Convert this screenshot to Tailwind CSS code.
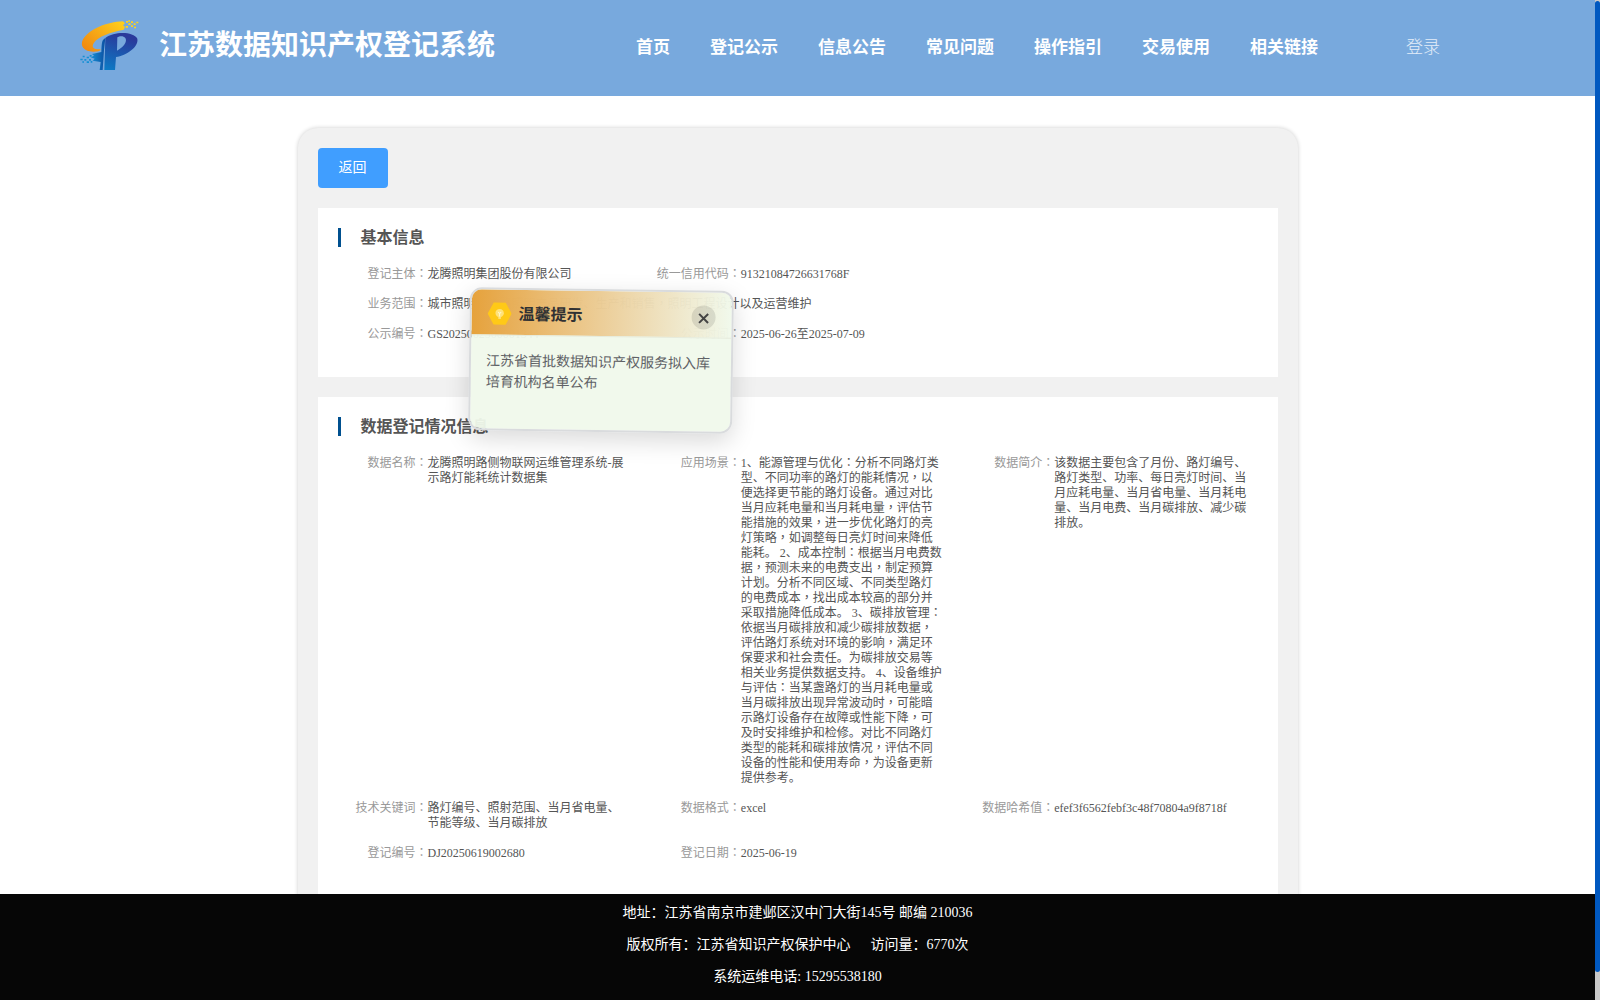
<!DOCTYPE html>
<html lang="zh-CN">
<head>
    <meta charset="UTF-8">
    <title>江苏数据知识产权登记系统</title>
    <script src="https://cdn.jsdelivr.net/npm/@tailwindcss/browser@4"></script>
    <style>
        body {
            font-family: "Liberation Serif", "Noto Sans CJK SC", serif;
        }
        /* full-width punctuation centred in its box */
        .label::after,
        .mid {
            font-family: "Noto Sans CJK TC", sans-serif;
            font-feature-settings: "locl" 0;
            line-height: 0;
        }
        .label::after {
            content: "：";
        }
    </style>
</head>
<body class="h-[1000px] overflow-hidden bg-white flex">
    <div class="w-[1595px] h-full flex flex-col">
        <header class="h-24 shrink-0 bg-[#78a9dd] flex items-center text-white whitespace-nowrap">
            <svg class="ml-[70px] mt-[-6px] w-20 h-[70px] shrink-0" viewBox="0 0 240 210">
                <defs>
                    <linearGradient id="gold" x1="0" y1="0.8" x2="1" y2="0">
                        <stop offset="0" stop-color="#f08a10" />
                        <stop offset="1" stop-color="#ffd21c" />
                    </linearGradient>
                    <linearGradient id="stem" x1="0" y1="0" x2="1" y2="0">
                        <stop offset="0" stop-color="#1590d4" />
                        <stop offset="1" stop-color="#0c4fa2" />
                    </linearGradient>
                    <linearGradient id="pbody" x1="0" y1="1" x2="0.3" y2="0">
                        <stop offset="0" stop-color="#0b7cc6" />
                        <stop offset="1" stop-color="#2a3a9b" />
                    </linearGradient>
                </defs>
                <path fill="url(#gold)" d="M159 34C110 36 57 58 39 88C28 110 44 126 72 125C88 125 90 123 92 118C72 119 62 112 72 98C84 80 122 66 161 59L165 51L159 46L165 40Z" />
                <path fill="#ffd21c" d="M168 33h6v5h-6zM175 40h7v5h-7zM183 34h6v5h-6zM167 48h7v5h-7zM183 46h6v5h-6zM191 40h6v5h-6zM199 35h6v5h-6zM192 50h6v5h-6zM175 31h5v4h-5z" />
                <path fill="url(#pbody)" d="M103 180L106 84C132 64 190 64 202 86C207 110 170 136 138 141L135 180ZM141 122C160 112 173 95 166 84C160 76 148 78 142 82Z" fill-rule="evenodd" />
                <path fill="url(#stem)" d="M106 84C97 89 95 94 94 126L66 132L72 137L62 142L74 146L68 152L92 156L89 180H98L102 120Z" />
                <path fill="#1590d4" d="M59 135h6v5h-6zM50 140h7v5h-7zM38 137h6v5h-6zM31 146h7v5h-7zM43 147h6v5h-6zM57 147h6v5h-6zM50 154h7v5h-7zM62 153h5v5h-5zM37 154h5v4h-5z" />
            </svg>
            <h1 class="ml-[9px] mt-[-4px] w-[337px] text-[28px] font-bold leading-none">江苏数据知识产权登记系统</h1>
            <nav class="ml-[140px] mt-[-2px] flex gap-10 text-[17px] leading-none font-bold">
                <a>首页</a>
                <a>登记公示</a>
                <a>信息公告</a>
                <a>常见问题</a>
                <a>操作指引</a>
                <a>交易使用</a>
                <a>相关链接</a>
            </nav>
            <a class="ml-[88px] mt-[-2px] text-[17px] leading-none font-light text-white/80">登录</a>
        </header>

        <main class="flex-1 min-h-0 overflow-hidden pt-8">
            <div class="mx-auto w-[1000px] h-[900px] rounded-[20px] bg-[#f1f1f1] p-5 shadow-[0_0_4px_rgba(0,0,0,0.2)]">
                <button class="block w-[70px] h-10 rounded bg-[#409eff] text-white text-sm">返回</button>

                <section class="mt-5 h-[169px] bg-white pt-5 text-xs leading-[15px] text-[#555] whitespace-nowrap">
                    <h2 class="ml-5 h-[19px] border-l-[3px] border-[#00508f] pl-5 text-base leading-[20px] font-bold">基本信息</h2>
                    <div class="mt-5 ml-[10px] grid grid-cols-[313.33px_313.33px_313.33px] gap-y-[15px]">
                        <div class="flex"><span class="label w-[100px] text-right text-[#999]">登记主体</span><span>龙腾照明集团股份有限公司</span></div>
                        <div class="flex col-span-2"><span class="label w-[100px] text-right text-[#999]">统一信用代码</span><span>91321084726631768F</span></div>
                        <div class="flex col-span-3"><span class="label w-[100px] text-right text-[#999]">业务范围</span><p>城市照明、道路照明产品研发、生产和销售，照明工程设计以及运营维护</p></div>
                        <div class="flex"><span class="label w-[100px] text-right text-[#999]">公示编号</span><span>GS2025062500001344</span></div>
                        <div class="flex col-span-2"><span class="label w-[100px] text-right text-[#999]">公示时间</span><span>2025-06-26至2025-07-09</span></div>
                    </div>
                </section>

                <section class="mt-5 h-[600px] bg-white pt-5 text-xs leading-[15px] text-[#555] whitespace-nowrap">
                    <h2 class="ml-5 h-[19px] border-l-[3px] border-[#00508f] pl-5 text-base leading-[20px] font-bold">数据登记情况信息</h2>
                    <div class="mt-5 ml-[10px] grid grid-cols-[313.33px_313.33px_313.33px] gap-y-[15px]">
                        <div class="flex"><span class="label w-[100px] text-right text-[#999]">数据名称</span><span>龙腾照明路侧物联网运维管理系统-展<br>示路灯能耗统计数据集</span></div>
                        <div class="flex"><span class="label w-[100px] text-right text-[#999]">应用场景</span>
                            <p>1、能源管理与优化：分析不同路灯类<br>型、不同功率的路灯的能耗情况，以<br>便选择更节能的路灯设备。通过对比<br>当月应耗电量和当月耗电量，评估节<br>能措施的效果，进一步优化路灯的亮<br>灯策略，如调整每日亮灯时间来降低<br>能耗。 2、成本控制：根据当月电费数<br>据，预测未来的电费支出，制定预算<br>计划。分析不同区域、不同类型路灯<br>的电费成本，找出成本较高的部分并<br>采取措施降低成本。 3、碳排放管理：<br>依据当月碳排放和减少碳排放数据，<br>评估路灯系统对环境的影响，满足环<br>保要求和社会责任。为碳排放交易等<br>相关业务提供数据支持。 4、设备维护<br>与评估：当某盏路灯的当月耗电量或<br>当月碳排放出现异常波动时，可能暗<br>示路灯设备存在故障或性能下降，可<br>及时安排维护和检修。对比不同路灯<br>类型的能耗和碳排放情况，评估不同<br>设备的性能和使用寿命，为设备更新<br>提供参考。</p>
                        </div>
                        <div class="flex"><span class="label w-[100px] text-right text-[#999]">数据简介</span>
                            <p>该数据主要包含了月份、路灯编号、<br>路灯类型、功率、每日亮灯时间、当<br>月应耗电量、当月省电量、当月耗电<br>量、当月电费、当月碳排放、减少碳<br>排放。</p>
                        </div>
                        <div class="flex"><span class="label w-[100px] text-right text-[#999]">技术关键词</span><span>路灯编号、照射范围、当月省电量、<br>节能等级、当月碳排放</span></div>
                        <div class="flex"><span class="label w-[100px] text-right text-[#999]">数据格式</span><span>excel</span></div>
                        <div class="flex"><span class="label w-[100px] text-right text-[#999]">数据哈希值</span><span>efef3f6562febf3c48f70804a9f8718f</span></div>
                        <div class="flex"><span class="label w-[100px] text-right text-[#999]">登记编号</span><span>DJ20250619002680</span></div>
                        <div class="flex"><span class="label w-[100px] text-right text-[#999]">登记日期</span><span>2025-06-19</span></div>
                    </div>
                </section>
            </div>
        </main>

        <footer class="h-[106px] shrink-0 bg-[#060606] pt-[3px] text-center text-sm leading-8 text-white">
            <p>地址：江苏省南京市建邺区汉中门大街145号 邮编 210036</p>
            <p>版权所有：江苏省知识产权保护中心<span class="ml-5">访问量：6770次</span></p>
            <p>系统运维电话: 15295538180</p>
        </footer>
    </div>

    <!-- scrollbar -->
    <div class="w-[5px] h-full bg-[#c8c8c8] pt-px">
        <div class="h-[971px] rounded-[3px] bg-[#0058c0]"></div>
    </div>

    <!-- floating notice -->
    <div class="absolute left-[469px] top-[289px] w-[264px] h-[143px] rotate-[0.8deg] rounded-xl border-2 border-[#d9dbdd] bg-[#f0f9eb]/95 bg-clip-padding shadow-[0_8px_24px_rgba(0,0,0,0.15)] overflow-hidden">
        <div class="h-[46px] flex items-center pt-[3px] pl-4 pr-4 border-b border-[#e6ebdc] bg-linear-to-r from-[#e6a23c] to-[#f0f9eb]/20">
            <svg class="w-6 h-6" viewBox="0 0 24 24">
                <path fill="#ffc917" d="M6 1h12l6 11-6 11H6L0 12Z" />
                <circle cx="12" cy="11.5" r="4.2" fill="#ffe27a" />
                <path d="M10.5 10.5l1.5 1.5 1.5-1.5M12 12v3M10.7 16.4h2.6" stroke="#fff6cf" fill="none" />
            </svg>
            <b class="mt-px ml-[7px] text-base leading-none text-[#303133]">温馨提示</b>
            <span class="mt-px ml-auto w-6 h-6 rounded-full bg-black/10 flex items-center justify-center">
                <svg class="mt-0.5 w-3 h-3" viewBox="0 0 12 12"><path d="M1.5 1.5l9 9M10.5 1.5l-9 9" stroke="#444" stroke-width="2" /></svg>
            </span>
        </div>
        <p class="pt-[15px] pl-[15px] text-sm leading-[21px] text-[#606266] whitespace-nowrap">江苏省首批数据知识产权服务拟入库<br>培育机构名单公布</p>
    </div>

    <script>
        // centre the commas and colons inside the long descriptions
        document.querySelectorAll('section p').forEach(p => {
            p.innerHTML = p.innerHTML.replace(/[：，]/g, '<span class="mid">$&</span>');
        });
    </script>
</body>
</html>
